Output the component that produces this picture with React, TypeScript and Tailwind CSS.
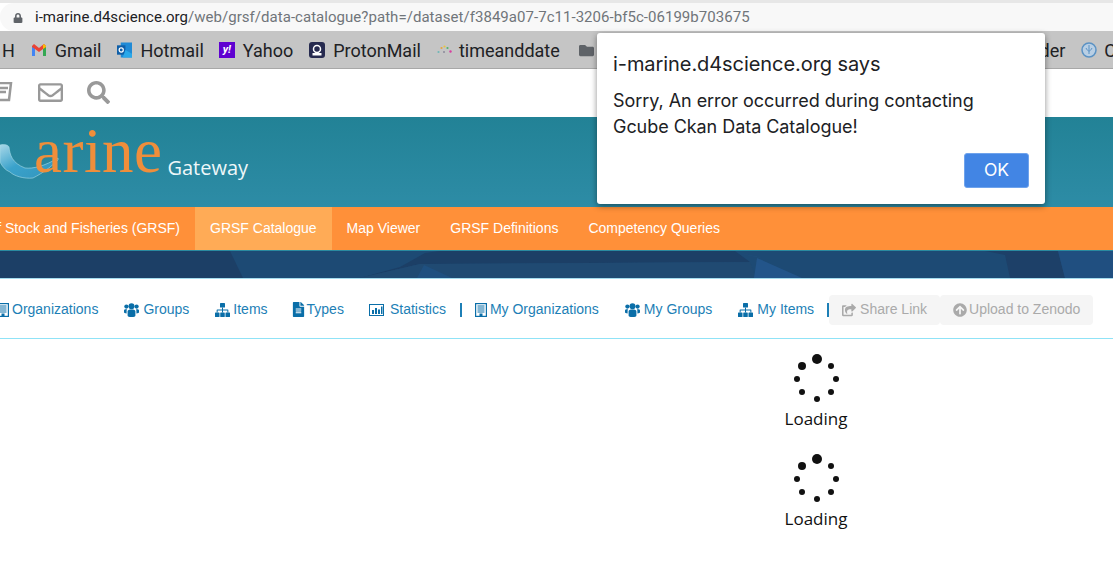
import React from "react";
import { FaFileAlt, FaShareSquare, FaArrowCircleUp, FaRegEnvelope, FaSearch, FaLock, FaFolder } from "react-icons/fa";

function Building() {
  return (
    <svg width="12" height="14" viewBox="0 0 12 14" className="shrink-0">
      <rect x="0.6" y="0.6" width="10.8" height="12.8" fill="none" stroke="#0a6ea8" strokeWidth="1.2" />
      <path d="M2.500 3h7M2.500 5h7M2.500 7h7M2.500 9h7" stroke="#0a6ea8" strokeWidth="1" />
      <rect x="4.500" y="10.500" width="3" height="3" fill="#0a6ea8" />
    </svg>
  );
}

function Chart() {
  return (
    <svg width="15" height="12" viewBox="0 0 15 12" className="shrink-0">
      <rect x="0.5" y="0.5" width="14" height="11" fill="none" stroke="#0a6ea8" strokeWidth="1" />
      <path d="M3 6h2v4H3zM6 4h2v6H6zM9 5.500h2V10H9zM12 2.500h1.500V10H12z" fill="#0a6ea8" />
    </svg>
  );
}

function Users() {
  return (
    <svg width="15" height="14" viewBox="0 0 15 14" className="shrink-0" fill="#0a6ea8">
      <circle cx="7.500" cy="3.200" r="3" />
      <circle cx="2.400" cy="3.600" r="2.100" />
      <circle cx="12.600" cy="3.600" r="2.100" />
      <path d="M3.600 8.500C3.600 7 5 6.500 7.500 6.500S11.400 7 11.400 8.500V12.500C11.400 13.500 10 14 7.500 14S3.600 13.500 3.600 12.500z" />
      <path d="M0 7.500C0 6.500 1 6 3 6.200 2.700 6.900 2.600 7.600 2.600 8.500V10.500C1 10.500 0 10 0 9.300z" />
      <path d="M15 7.500C15 6.500 14 6 12 6.200 12.300 6.900 12.400 7.600 12.400 8.500V10.500C14 10.500 15 10 15 9.300z" />
    </svg>
  );
}

function Sitemap() {
  return (
    <svg width="15" height="14" viewBox="0 0 15 14" className="shrink-0" fill="#0a6ea8">
      <rect x="5" y="0" width="5" height="4.500" rx="0.6" />
      <rect x="0" y="9.500" width="4.500" height="4.500" rx="0.6" />
      <rect x="5.250" y="9.500" width="4.500" height="4.500" rx="0.6" />
      <rect x="10.500" y="9.500" width="4.500" height="4.500" rx="0.6" />
      <path d="M7 4.500h1V6.500h4.750a.6.6 0 0 1 .6.6V9.500h-1V7.500H8V9.500H7V7.500H2.650V9.500h-1V7.100a.6.6 0 0 1 .6-.6H7z" />
    </svg>
  );
}

function NavLink({ icon, label, ml, box, gap }: { icon: React.ReactNode; label: string; ml: string; box: string; gap: string }) {
  return (
    <a className={`flex items-center whitespace-nowrap text-[14px] text-[#1d7fb6] ${ml} ${gap}`}>
      <span className={`flex justify-center items-center text-[#0a6ea8] text-[15px] [&>svg]:shrink-0 ${box}`}>{icon}</span>
      {label}
    </a>
  );
}

function Spinner() {
  const dots = [
    [24, 6, 5], [9, 13, 4], [38, 13, 3], [4, 26, 3], [43, 26, 3], [9, 39, 3], [38, 39, 3], [24, 46, 3],
  ];
  return (
    <div className="flex flex-col items-center h-[100px]">
      <svg width="46" height="52" viewBox="0 0 46 52" className="block">
        {dots.map(([x, y, r], i) => (
          <circle key={i} cx={x} cy={y} r={r} fill="#111" />
        ))}
      </svg>
      <div className="text-[17px] leading-[24px] text-[#111] font-['Open_Sans','Noto_Sans',sans-serif] mt-[2px]">Loading</div>
    </div>
  );
}

export default function App() {
  return (
    <div className="relative w-[1113px] h-[581px] overflow-hidden bg-white font-['Liberation_Sans',Arial,sans-serif]">
      {/* address bar */}
      <div className="h-[3px] bg-[#e7e7e7]" />
      <div className="h-[28px] bg-[#f8f8f8] rounded-l-[14px] flex items-center pl-[13px] pt-[1px] font-['Roboto',sans-serif] text-[15px] tracking-[0.04px] text-[#70757a]">
        <FaLock className="text-[#5f6368] text-[10px] mr-[12px]" />
        <span className="text-[#202124]">i-marine.d4science.org</span>
        <span>/web/grsf/data-catalogue?path=/dataset/f3849a07-7c11-3206-bf5c-06199b703675</span>
      </div>
      {/* bookmarks */}
      <div className="h-[38px] bg-[#c5c5c5] border-b border-[#a8a8a8] flex items-center pt-[1px] font-['Roboto',sans-serif] text-[18px] text-[#202124]">
        <span className="ml-[2px]">H</span>
        <span className="ml-[17px] flex items-center gap-[9px]">
          <svg width="14" height="12" viewBox="0 0 14 12"><path d="M0 2v10h3V5l4 3 4-3v7h3V2L12 0 7 4 2 0z" fill="#ea4335" /><path d="M0 3v9h3V5z" fill="#4285f4" /><path d="M11 5v7h3V3z" fill="#34a853" /><path d="M12 0l2 2v1l-3 2V1z" fill="#fbbc04" /></svg>
          Gmail
        </span>
        <span className="ml-[16px] flex items-center gap-[8px]">
          <svg width="15" height="16" viewBox="0 0 16 16"><rect x="4" y="0" width="12" height="16" fill="#1f8ad6" /><rect x="0" y="3" width="9" height="10" fill="#0f5fa8" /><circle cx="4.500" cy="8" r="2.200" fill="none" stroke="#fff" strokeWidth="1.300" /><path d="M9 8l7 4v4H6z" fill="#28a8ea" /></svg>
          Hotmail
        </span>
        <span className="ml-[15px] flex items-center gap-[8px]">
          <span className="w-[16px] h-[16px] bg-[#5f01d1] text-white text-[11px] font-bold italic leading-[16px] text-center">y!</span>
          Yahoo
        </span>
        <span className="ml-[16px] flex items-center gap-[8px]">
          <svg width="16" height="16" viewBox="0 0 16 16"><rect width="16" height="16" rx="3" fill="#262a4f" /><circle cx="8" cy="7" r="3.500" fill="none" stroke="#fff" strokeWidth="1.500" /><path d="M3.500 11h9v2.500h-9z" fill="#fff" /></svg>
          ProtonMail
        </span>
        <span className="ml-[16px] flex items-center gap-[7px]">
          <svg width="15" height="10" viewBox="0 0 15 10"><circle cx="1.500" cy="7" r="1.100" fill="#6fb7b7" /><circle cx="4.500" cy="3" r="1.100" fill="#e8a33d" /><circle cx="7.500" cy="1.500" r="1.100" fill="#e8c53d" /><circle cx="10.500" cy="3" r="1.100" fill="#4fb36b" /><circle cx="13.500" cy="6.500" r="1.200" fill="#d83fa0" /><circle cx="7" cy="7" r="1" fill="#8a8a9a" /></svg>
          timeanddate
        </span>
        <FaFolder className="ml-[19px] text-[#5f6368] text-[15px]" />
        <span className="ml-auto">der</span>
        <svg className="ml-[16px]" width="16" height="16" viewBox="0 0 16 16"><circle cx="8" cy="8" r="7" fill="#b9cfe4" stroke="#5b92c4" strokeWidth="1.500" /><path d="M8 3v9M5 6c1 2 2 3 3 3s2-1 3-3" stroke="#5b92c4" fill="none" /></svg>
        <span className="ml-[7px] mr-[-3px]">C</span>
      </div>
      {/* portal top */}
      <div className="h-[48px] flex items-center pb-[2px] text-[#999]">
        <svg className="ml-[-8px]" width="22" height="20" viewBox="0 0 22 20"><path d="M3 1h16l-2 17H1z" fill="none" stroke="#999" strokeWidth="2.500" /><path d="M4 6h12M4 10h10" stroke="#999" strokeWidth="2.500" /></svg>
        <FaRegEnvelope className="ml-[24px] text-[25px]" />
        <FaSearch className="ml-[24px] text-[23px]" />
      </div>
      {/* banner */}
      <div className="h-[90px] bg-gradient-to-b from-[#228296] to-[#2d8ca6] flex items-start overflow-hidden">
        <svg className="mt-[8px] shrink-0" width="62" height="55" viewBox="0 0 62 55">
          <defs>
            <linearGradient id="sw" x1="0" y1="0" x2="1" y2="1">
              <stop offset="0" stopColor="#a9d8e8" />
              <stop offset="0.45" stopColor="#3aa2cb" />
              <stop offset="1" stopColor="#3294bb" />
            </linearGradient>
          </defs>
          <path d="M0 20C5 19 8 20 9 22C10 30 12 38 25 43C33 44 45 41 58 33L58 35C52 41 43 48 33 53C24 54 14 51 10 47C5 45 2 41 0 37z" fill="url(#sw)" stroke="#a8dbe8" strokeWidth="0.600" />
        </svg>
        <span className="ml-[-28px] mt-[-2px] text-[63px] tracking-[0.5px] leading-[72px] text-[#ef8e3b] font-['Liberation_Serif',serif]">arine</span>
        <span className="ml-[5px] mt-[36px] text-[20px] text-[#eef7f9] font-['Open_Sans',sans-serif]">Gateway</span>
      </div>
      {/* orange nav */}
      <div className="h-[43px] bg-[#ff9039] flex text-[14px] text-white items-stretch">
        <a className="flex items-center justify-end w-[195px] overflow-hidden pr-[15px] whitespace-nowrap shrink-0">Global Record of Stock and Fisheries (GRSF)</a>
        <a className="flex items-center px-[15px] bg-[#ffab56]">GRSF Catalogue</a>
        <a className="flex items-center px-[15px]">Map Viewer</a>
        <a className="flex items-center px-[15px]">GRSF Definitions</a>
        <a className="flex items-center px-[15px]">Competency Queries</a>
      </div>
      {/* dark band */}
      <div className="relative h-[29px] bg-[#1d4a74] border-t border-[#2a8aa0] border-b-[1px] border-b-[#a5dcee] overflow-hidden">
        <svg className="absolute inset-0" width="1113" height="27" viewBox="0 0 1113 27">
          <polygon points="0,0 230,0 243,27 0,27" fill="#1c3f66" />
          <polygon points="360,27 400,16 425,2 440,0 750,0 735,0 750,11 420,13" fill="#1c3f66" />
          <polygon points="420,13 750,11 756,27 360,27" fill="#204a72" />
          <polygon points="417,27 424,14 452,27" fill="#1f5080" />
          <polygon points="730,0 762,7 757,6" fill="#2d639a" />
          <polygon points="757,7 802,27 754,27" fill="#23558a" />
          <polygon points="985,0 1005,4 1010,27 1065,27 1058,0" fill="#1d4068" />
          <polygon points="1065,27 1058,0 1113,0 1113,27" fill="#204f80" />
        </svg>
      </div>
      {/* catalogue nav */}
      <div className="h-[60px] border-b border-[#8fe3f7] flex items-center pt-[2px]">
        <NavLink ml="ml-[-3px]" box="w-[12px]" gap="gap-[3px]" icon={<Building />} label="Organizations" />
        <NavLink ml="ml-[26px]" box="w-[15px]" gap="gap-[4px]" icon={<Users />} label="Groups" />
        <NavLink ml="ml-[26px]" box="w-[15px]" gap="gap-[3px]" icon={<Sitemap />} label="Items" />
        <NavLink ml="ml-[25px]" box="w-[11px]" gap="gap-[3px]" icon={<FaFileAlt />} label="Types" />
        <NavLink ml="ml-[25px]" box="w-[15px]" gap="gap-[6px]" icon={<Chart />} label="Statistics" />
        <span className="ml-[14px] w-[2px] h-[14px] bg-[#1d7fb6]" />
        <NavLink ml="ml-[13px]" box="w-[12px]" gap="gap-[3px]" icon={<Building />} label="My Organizations" />
        <NavLink ml="ml-[26px]" box="w-[15px]" gap="gap-[4px]" icon={<Users />} label="My Groups" />
        <NavLink ml="ml-[26px]" box="w-[15px]" gap="gap-[4px]" icon={<Sitemap />} label="My Items" />
        <span className="ml-[13px] w-[2px] h-[14px] bg-[#1d7fb6]" />
        <button className="h-[30px] px-[13px] flex items-center gap-[4px] rounded-[4px] bg-[#f5f5f5] text-[14px] text-[#aaa] whitespace-nowrap"><FaShareSquare /> Share Link</button>
        <button className="h-[30px] px-[13px] flex items-center gap-[2px] rounded-[4px] bg-[#f5f5f5] text-[14px] text-[#aaa] whitespace-nowrap"><FaArrowCircleUp /> Upload to Zenodo</button>
      </div>
      {/* loading */}
      <div className="flex flex-col items-center w-[62px] ml-[785px] mt-[14px]">
        <Spinner />
        <Spinner />
      </div>
      {/* alert dialog */}
      <div className="absolute left-[597px] top-[33px] w-[448px] h-[171px] bg-white rounded-[3px] shadow-[0_2px_6px_rgba(0,0,0,0.45)] px-[16px] pt-[18px] font-['Inter',sans-serif] text-[#202124]">
        <div className="text-[20px] tracking-[-0.07px] leading-[27px]">i-marine.d4science.org says</div>
        <div className="mt-[10px] text-[18px] tracking-[-0.05px] leading-[26px]">Sorry, An error occurred during contacting<br />Gcube Ckan Data Catalogue!</div>
        <button className="absolute right-[16px] bottom-[16px] w-[65px] h-[35px] rounded-[3px] bg-[#4285e4] border border-[#6fa3ec] text-white text-[17.500px]">OK</button>
      </div>
    </div>
  );
}
